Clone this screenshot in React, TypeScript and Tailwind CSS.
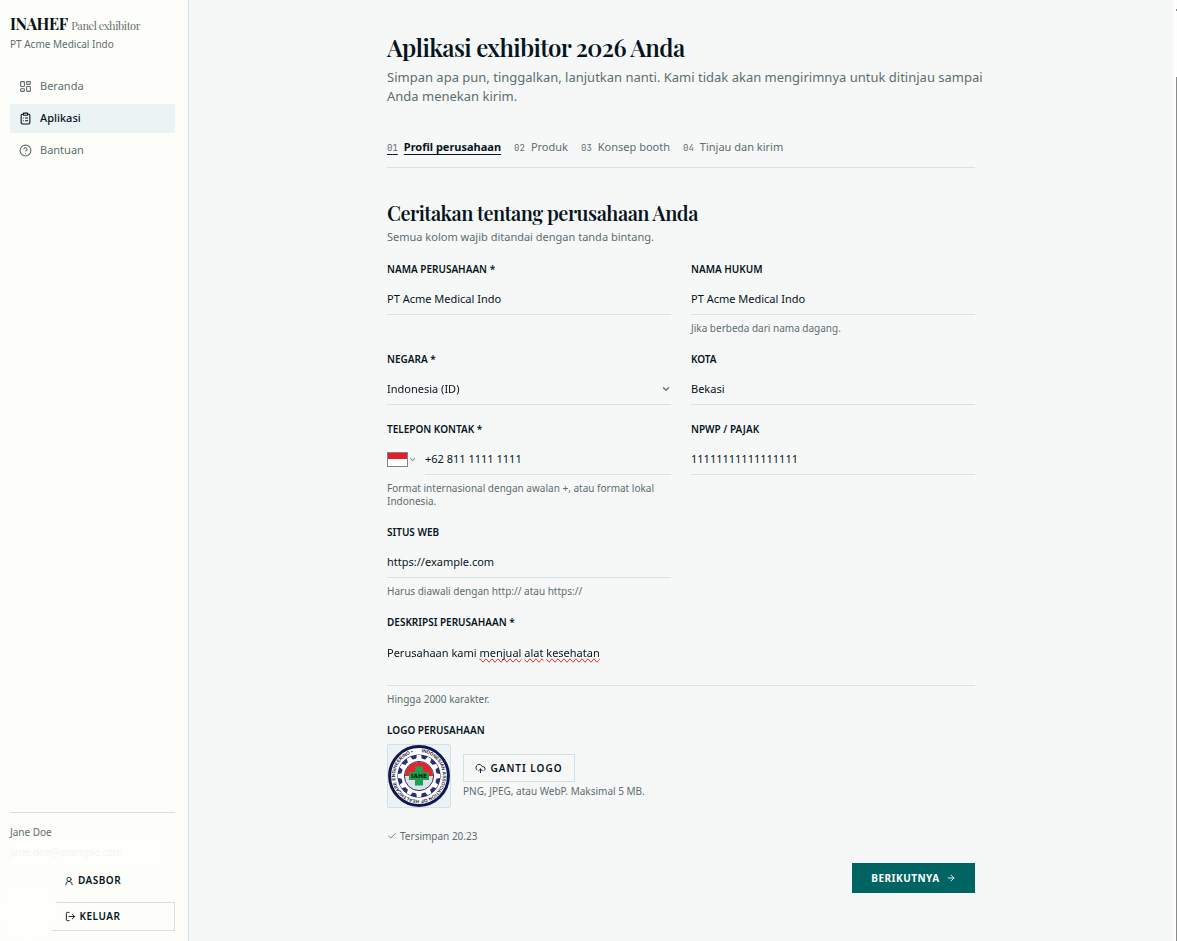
import { ReactNode, useState } from "react";
import {
  ArrowRight,
  Check,
  ChevronDown,
  CircleHelp,
  ClipboardList,
  CloudUpload,
  LayoutDashboard,
  LogOut,
  UserRound,
} from "lucide-react";
import clsx from "clsx";

const NAV_ITEMS = [
  { label: "Beranda", icon: LayoutDashboard, active: false },
  { label: "Aplikasi", icon: ClipboardList, active: true },
  { label: "Bantuan", icon: CircleHelp, active: false },
];

const STEPS = ["Profil perusahaan", "Produk", "Konsep booth", "Tinjau dan kirim"];

const SERIF = "font-['Playfair_Display','Liberation_Serif',serif] tracking-tight";

const inputStyle =
  "block h-8 w-full border-b border-[#d7e2e2] bg-transparent text-[11px] leading-4 text-[#06141b] outline-none focus:border-[#006462]";

const Field = ({
  id,
  label,
  hint,
  className,
  children,
}: {
  id: string;
  label: string;
  hint?: string;
  className?: string;
  children: ReactNode;
}) => (
  <div className={className}>
    <label
      htmlFor={id}
      className="mb-[7px] block text-[10px] leading-[13px] font-semibold text-[#06141b] uppercase"
    >
      {label}
    </label>
    {children}
    {hint && (
      <p className="mt-[7px] text-[10px] leading-[13px] text-[#5d6d70]">{hint}</p>
    )}
  </div>
);

const TextField = ({
  id,
  label,
  hint,
  initial,
}: {
  id: string;
  label: string;
  hint?: string;
  initial: string;
}) => {
  const [value, setValue] = useState(initial);

  return (
    <Field id={id} label={label} hint={hint}>
      <input
        id={id}
        type="text"
        value={value}
        onChange={(e) => setValue(e.target.value)}
        className={inputStyle}
      />
    </Field>
  );
};

const PhoneField = () => {
  const [phone, setPhone] = useState("+62 811 1111 1111");

  return (
    <Field
      id="phone"
      label="Telepon kontak *"
      hint="Format internasional dengan awalan +, atau format lokal Indonesia."
    >
      <div className="flex items-center gap-2">
        <button
          type="button"
          aria-label="Pilih kode negara"
          className="flex shrink-0 items-center"
        >
          <span className="flex h-[15px] w-[21px] flex-col border border-[#7d8587]">
            <span className="flex-1 bg-[#e31e26]" />
            <span className="flex-1 bg-white" />
          </span>
          <ChevronDown strokeWidth={3} className="size-[9px] text-[#8d999b]" />
        </button>
        <input
          id="phone"
          type="tel"
          value={phone}
          onChange={(e) => setPhone(e.target.value)}
          className={inputStyle}
        />
      </div>
    </Field>
  );
};

const CountryField = () => (
  <Field id="country" label="Negara *">
    <div className="relative">
      <select
        id="country"
        defaultValue="ID"
        className={clsx(inputStyle, "appearance-none pr-5")}
      >
        <option value="ID">Indonesia (ID)</option>
        <option value="MY">Malaysia (MY)</option>
        <option value="SG">Singapura (SG)</option>
      </select>
      <ChevronDown
        strokeWidth={3}
        className="pointer-events-none absolute top-[11px] right-0 size-[10px] text-[#5d6d70]"
      />
    </div>
  </Field>
);

const DescriptionField = () => {
  const [text, setText] = useState("Perusahaan kami menjual alat kesehatan");

  return (
    <Field
      id="description"
      label="Deskripsi perusahaan *"
      hint="Hingga 2000 karakter."
      className="col-span-2"
    >
      <div className="relative">
        <textarea
          id="description"
          value={text}
          onChange={(e) => setText(e.target.value)}
          spellCheck={false}
          className="block h-[50px] w-full resize-none border-b border-[#d7e2e2] bg-transparent pt-2 text-[11px] leading-[18px] text-[#06141b] outline-none"
        />
        {/* misspelling marks, drawn above the textarea */}
        <p
          aria-hidden="true"
          className="pointer-events-none absolute inset-x-0 top-2 text-[11px] leading-[18px] text-transparent"
        >
          {text.split(" ").map((word, i) => (
            <span key={i}>
              <span className={clsx(i > 1 && "[text-decoration-line:spelling-error]")}>
                {word}
              </span>{" "}
            </span>
          ))}
        </p>
      </div>
    </Field>
  );
};

const CompanyLogo = () => (
  <svg viewBox="1 1 62 62" className="size-full" role="img" aria-label="Logo IAHE">
    <defs>
      <path id="ring" d="M32 8.1a23.9 23.9 0 1 1-.01 0" transform="rotate(6 32 32)" />
    </defs>
    <circle cx="32" cy="32" r="29.4" fill="#fff" stroke="#111650" strokeWidth="3" />
    <text
      fill="#15151f"
      fontSize="4.7"
      fontWeight="700"
      fontFamily="Liberation Sans, sans-serif"
    >
      <textPath href="#ring">INDONESIAN ASSOCIATION OF HEALTHCARE ENGINEERING •</textPath>
    </text>
    <circle cx="32" cy="32" r="21.6" fill="#2b2e73" />
    {Array.from({ length: 12 }, (_, i) => (
      <path
        key={i}
        d="M29 16l.9-5h4.2l.9 5z"
        fill="#fff"
        transform={`rotate(${i * 30} 32 32)`}
      />
    ))}
    <circle cx="32" cy="32" r="17.6" fill="#fff" />
    <circle cx="32" cy="32" r="14.6" fill="#dfe1e8" stroke="#2b2e73" />
    <path d="M18 32a14 14 0 0 1 28 0z" fill="#e5242a" />
    <path d="M28 22.5h8V28h6v8h-6v5.5h-8V36h-6v-8h6z" fill="#1ca152" />
    <text
      x="32"
      y="34.2"
      fill="#0b1612"
      fontSize="6"
      fontWeight="700"
      textAnchor="middle"
      fontFamily="DejaVu Sans, sans-serif"
    >
      IAHE
    </text>
  </svg>
);

const Sidebar = () => (
  <aside className="sticky top-0 flex h-screen w-[189px] shrink-0 flex-col border-r border-[#d3e1e3] bg-[#fdfef9] pt-[14px] pr-[13px] pb-[10px] pl-[10px]">
    <p className={clsx(SERIF, "leading-5 whitespace-nowrap")}>
      <span className="text-[16px] font-bold text-[#06141b]">INAHEF</span>{" "}
      <span className="text-[11px] text-[#5d6d70]">Panel exhibitor</span>
    </p>
    <p className="mt-px text-[10px] leading-[15px] text-[#5d6d70]">PT Acme Medical Indo</p>

    <nav className="mt-5 flex flex-col gap-[3px]">
      {NAV_ITEMS.map(({ label, icon: Icon, active }) => (
        <a
          key={label}
          href="#"
          className={clsx(
            "flex h-[29px] items-center gap-2 px-[9px] text-[11px]",
            active ? "bg-[#ebf3f4] font-medium text-[#06141b]" : "text-[#5d6d70]"
          )}
        >
          <Icon className="size-[13px]" />
          {label}
        </a>
      ))}
    </nav>

    <div className="mt-auto border-t border-[#d3e1e3] pt-3 text-[#06141b]">
      <p className="text-[10px] leading-[14px] text-[#5d6d70]">Jane Doe</p>
      <p className="h-[27px] w-[150px] bg-[#fefefd] text-[10px] leading-[26px] text-[#f4f5f1]">
        jane.doe@example.com
      </p>
      <button
        type="button"
        className="flex h-[29px] w-full items-center justify-center gap-1 text-[10px] font-semibold tracking-wider"
      >
        <UserRound className="size-[10px]" />
        DASBOR
      </button>
      <div className="relative mt-[7px]">
        <button
          type="button"
          className="flex h-[29px] w-full items-center justify-center gap-1 border border-[#d3e1e3] text-[10px] font-semibold tracking-wider"
        >
          <LogOut className="size-[11px]" />
          KELUAR
        </button>
        <span className="pointer-events-none absolute -top-5 -left-3 size-[60px] rounded-full bg-[#fefefd]" />
      </div>
    </div>
  </aside>
);

const Steps = () => (
  <ol className="mt-[33px] flex gap-[13px] border-b border-[#d7e2e2] pb-3 text-[11px] leading-4 whitespace-nowrap">
    {STEPS.map((step, i) => (
      <li key={step}>
        <a
          href="#"
          className={clsx(
            "flex items-baseline gap-[6px]",
            i === 0 ? "font-bold text-[#06141b]" : "text-[#5d6d70]"
          )}
        >
          <span
            className={clsx(
              "font-['JetBrains_Mono','DejaVu_Sans_Mono',monospace] text-[9px] leading-3 font-normal text-[#5d6d70]",
              i === 0 && "underline decoration-[#06141b] decoration-1 underline-offset-[3px]"
            )}
          >
            0{i + 1}
          </span>
          <span
            className={clsx(i === 0 && "underline decoration-1 underline-offset-[3px]")}
          >
            {step}
          </span>
        </a>
      </li>
    ))}
  </ol>
);

export default function App() {
  return (
    <div className="flex min-h-screen bg-[#f6f8f8] font-['Noto_Sans',sans-serif]">
      <Sidebar />

      <main className="flex-1 px-6 pt-8 pb-12">
        <div className="mx-auto max-w-[588px]">
          <h1
            className={clsx(SERIF, "text-[24px] leading-[30px] font-semibold text-[#06141b]")}
          >
            Aplikasi exhibitor 2026 Anda
          </h1>
          <p className="mt-[6px] -mr-3 text-[13px] leading-[19px] text-[#5d6d70]">
            Simpan apa pun, tinggalkan, lanjutkan nanti. Kami tidak akan mengirimnya
            untuk ditinjau sampai Anda menekan kirim.
          </p>

          <Steps />

          <h2
            className={clsx(
              SERIF,
              "mt-8 text-[20px] leading-[26px] font-semibold text-[#06141b]"
            )}
          >
            Ceritakan tentang perusahaan Anda
          </h2>
          <p className="mt-[3px] text-[11px] leading-4 text-[#5d6d70]">
            Semua kolom wajib ditandai dengan tanda bintang.
          </p>

          <form onSubmit={(e) => e.preventDefault()}>
            <div className="mt-[18px] grid grid-cols-2 gap-x-5 gap-y-[18px]">
              <TextField id="name" label="Nama perusahaan *" initial="PT Acme Medical Indo" />
              <TextField
                id="legal"
                label="Nama hukum"
                initial="PT Acme Medical Indo"
                hint="Jika berbeda dari nama dagang."
              />
              <CountryField />
              <TextField id="city" label="Kota" initial="Bekasi" />
              <PhoneField />
              <TextField id="npwp" label="NPWP / Pajak" initial="11111111111111111" />
              <TextField
                id="website"
                label="Situs web"
                initial="https://example.com"
                hint="Harus diawali dengan http:// atau https://"
              />
              <DescriptionField />
              <Field id="logo" label="Logo perusahaan" className="col-span-2">
                <div className="flex items-center gap-3">
                  <div className="size-16 rounded-xs border border-[#d3e1e3] bg-[#ebf3f4]">
                    <CompanyLogo />
                  </div>
                  <div>
                    <button
                      id="logo"
                      type="button"
                      className="flex h-7 w-28 items-center justify-center gap-1 border border-[#d3e1e3] text-[10px] font-semibold tracking-widest text-[#06141b]"
                    >
                      <CloudUpload className="size-[11px]" />
                      GANTI LOGO
                    </button>
                    <p className="mt-[3px] text-[10px] leading-[13px] text-[#5d6d70]">
                      PNG, JPEG, atau WebP. Maksimal 5 MB.
                    </p>
                  </div>
                </div>
              </Field>
            </div>

            <p className="mt-[21px] flex items-center gap-[3px] text-[10px] leading-[14px] text-[#5d6d70]">
              <Check className="size-[10px]" />
              Tersimpan 20.23
            </p>

            <div className="mt-5 flex justify-end">
              <button
                type="submit"
                className="flex h-[30px] w-[123px] items-center justify-center gap-[6px] bg-[#006462] text-[10px] font-bold tracking-wider text-white"
              >
                BERIKUTNYA
                <ArrowRight className="size-[10px]" />
              </button>
            </div>
          </form>
        </div>
      </main>

      {/* scroll track */}
      <div className="flex w-1 shrink-0 flex-col items-end gap-[66px] bg-[#fdfdfd] pt-[9px]">
        <span className="h-[2px] w-px bg-[#8b8b8b]" />
        <span className="w-px flex-1 bg-[#8b8b8b]" />
      </div>
    </div>
  );
}
